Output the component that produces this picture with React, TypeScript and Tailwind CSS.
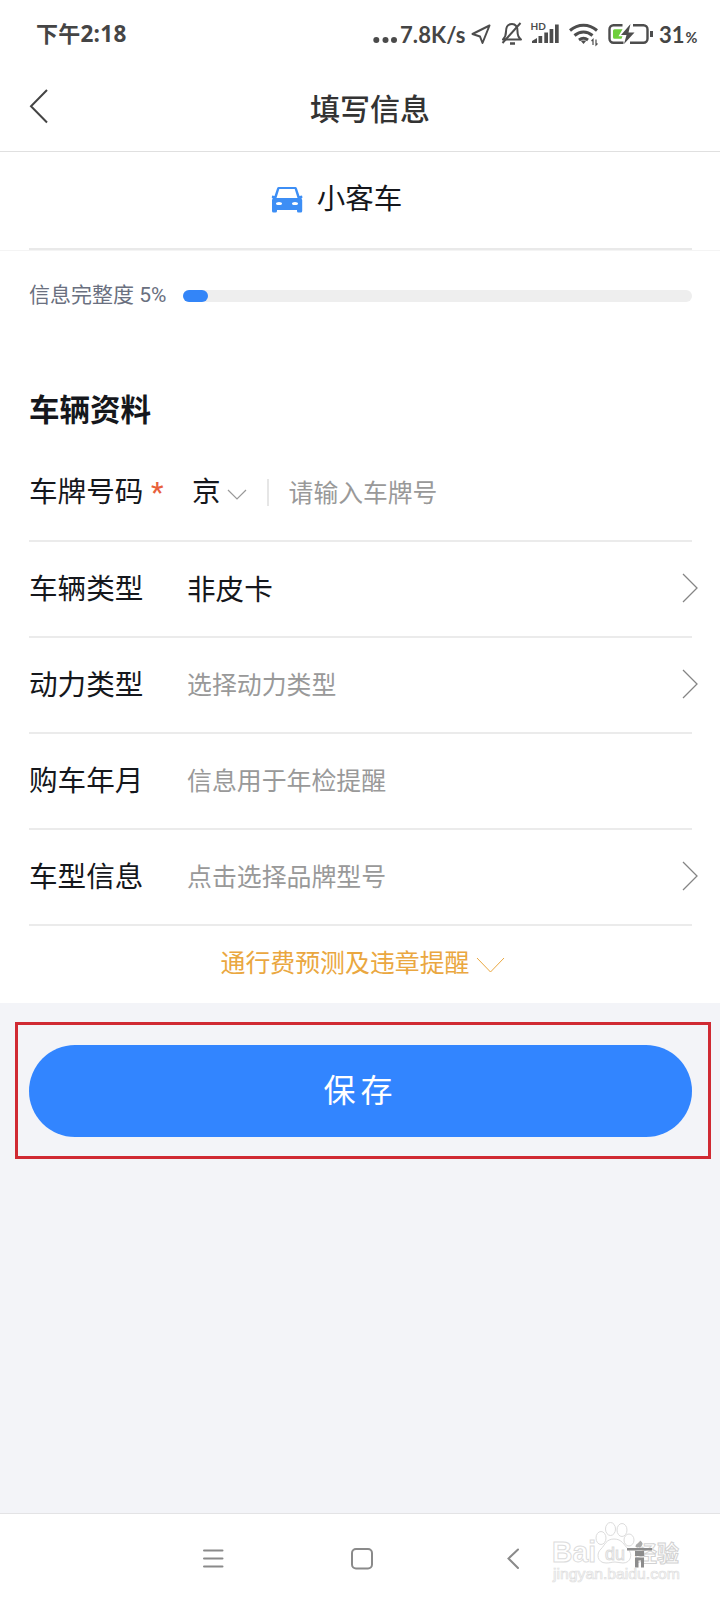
import { clsx } from "clsx";

type Row = {
  label: string;
  value: string;
  filled?: boolean;
  arrow?: boolean;
};

const rows: Row[] = [
  { label: "车辆类型", value: "非皮卡", filled: true, arrow: true },
  { label: "动力类型", value: "选择动力类型", arrow: true },
  { label: "购车年月", value: "信息用于年检提醒" },
  { label: "车型信息", value: "点击选择品牌型号", arrow: true },
];

const StatusBar = () => (
  <div className="flex h-[68px] items-center pl-[36px] font-['Lato','Noto_Sans_CJK_SC',sans-serif] font-bold text-[#454545]">
    <span className="w-[336px] text-[22px] leading-none tracking-[0.2px]">
      下午
      <span className="font-['Open_Sans',sans-serif] text-[22.5px] font-bold tracking-[0.3px]">
        2:18
      </span>
    </span>
    <svg className="h-[50px] w-[28px]" viewBox="372 9 28 50" fill="#4a4a4a">
      <circle cx="376.3" cy="40" r="3" />
      <circle cx="385.5" cy="40" r="3" />
      <circle cx="394" cy="40" r="3" />
    </svg>
    <span className="w-[70px] pt-[1px] text-[22px] leading-none tracking-[0.1px]">
      7.8K/s
    </span>
    {/* Location, muted, signal, wifi and battery */}
    <svg
      className="h-[50px] w-[187px]"
      viewBox="470 9 187 50"
      fill="none"
      stroke="#4d4d4d"
      strokeWidth="2"
    >
      <path d="M489.5 25.5 472.5 34l7.5 2.500 2.500 6.500z" strokeLinejoin="round" />
      <path
        d="M503 39.500h18c-2.500-2-3.500-4-3.500-8 0-5-2-7.500-5.500-7.500s-6 2.500-6 7.500c0 4-1 6-3 8z"
        strokeLinejoin="round"
      />
      <path d="M520.500 23 502.500 43" />
      <path d="M510 43.500h5" strokeWidth="2.500" />
      <g fill="#4d4d4d" stroke="none">
        <path d="M532 43v-2l5-3v5zM538.500 36h3.700v7h-3.700zM544.300 32.500h3.700V43h-3.700zM549.600 29h3.700v14h-3.700zM555 24.500h3.700V43H555z" />
      </g>
      <text
        x="530.500"
        y="30"
        fontSize="10"
        fontWeight="700"
        fill="#4d4d4d"
        stroke="none"
        fontFamily="Lato, sans-serif"
      >
        HD
      </text>
      <g strokeWidth="3">
        <path d="M570 30.500c8-7 19-7 27 0" />
        <path d="M574.500 35.500c5.500-4.700 12.500-4.700 18 0" />
        <path d="M579 40c3-2.300 6-2.300 9 0" />
      </g>
      <path d="M580.500 40.500 583.500 44l3-3.500z" fill="#4d4d4d" stroke="none" />
      <path d="m591.500 41 1.500-1.500V45M597.500 43.500 596 45v-5.500" strokeWidth="1.200" />
      <path
        d="M622.500 25.300h-9a4 4 0 0 0-4 4v9.400a4 4 0 0 0 4 4h10M633 25.300h10.500a4 4 0 0 1 4 4v9.400a4 4 0 0 1-4 4H630"
        strokeWidth="2.400"
      />
      <path d="M651.500 31v6" strokeWidth="3" />
      <path d="M614.500 29.300h8l-4 7h4l-1 2.500h-7a1.500 1.500 0 0 1-1.500-1.500v-6.500a1.500 1.500 0 0 1 1.500-1.500z" fill="#6fcf3c" stroke="none" />
      <path d="M630.500 24 621 35h5.500l-2.500 9 10.500-11.500h-6z" fill="#4d4d4d" stroke="none" />
    </svg>
    <span className="flex items-baseline pt-[1px] pl-[2px] text-[22px] leading-none">
      31<span className="pl-[1px] text-[14.500px]">%</span>
    </span>
  </div>
);

const ArrowRight = () => (
  <svg
    className="mb-[2px] ml-auto h-[30px] w-[16px]"
    viewBox="0 0 16 30"
    fill="none"
    stroke="#858585"
    strokeWidth="1.3"
  >
    <path d="M1 1 15 15 1 29" />
  </svg>
);

const Watermark = () => (
  <svg
    className="absolute top-[6px] left-[545px] h-[80px] w-[160px]"
    viewBox="545 1520 160 80"
    fill="#fff"
    stroke="#dcdcdc"
    strokeWidth="1"
    fontFamily="'Liberation Sans', 'Noto Sans CJK SC', sans-serif"
    fontWeight="700"
  >
    <text x="552" y="1562" fontSize="29" textLength="44" lengthAdjust="spacingAndGlyphs">
      Bai
    </text>
    <ellipse cx="601" cy="1538" rx="5" ry="6.500" />
    <ellipse cx="610.500" cy="1529" rx="5" ry="6.500" />
    <ellipse cx="622" cy="1530" rx="5" ry="6.500" />
    <ellipse cx="629" cy="1540" rx="5" ry="6" />
    <path d="M614 1539c-8 0-9 6-13 10-5 4-4 14 5 14 4 0 6-1 9-1s5 1 8 1c8 0 10-9 5-14-4-4-6-10-14-10z" />
    <text x="605" y="1560" fontSize="18" fontWeight="400" textLength="20" lengthAdjust="spacingAndGlyphs">
      du
    </text>
    <text x="635" y="1560.500" fontSize="22" textLength="44" stroke="#d2d2d2">
      经验
    </text>
    <g fill="#8c8c8c" stroke="none">
      <path d="M627 1548h25v2.500h-25zM635 1551h9v5h-9zM635 1557.500h9v10h-3v-7h-2.500v7H635z" />
      <path
        d="M635.500 1547c0-4 4-3.500 4.500-6.500 3 1.500 3.500 4.500 0 7z"
        fill="#aaa"
      />
    </g>
    <text
      x="553"
      y="1579"
      fontSize="15"
      fontWeight="400"
      strokeWidth="0.700"
      stroke="#dedede"
      textLength="127"
      lengthAdjust="spacingAndGlyphs"
    >
      jingyan.baidu.com
    </text>
  </svg>
);

const App = () => {
  const progress = 5;

  return (
    <div className="flex h-[1600px] w-[720px] flex-col overflow-hidden bg-[#f3f4f8] font-['Roboto','Noto_Sans_CJK_SC',sans-serif] text-[#15171c]">
      <div className="h-[1003px] bg-white">
        <StatusBar />

        {/* Header */}
        <div className="relative flex h-[84px] items-center justify-center border-b border-[#e0e0e0] pl-[20px]">
          <svg
            className="absolute top-[20px] left-[29px] h-[36px] w-[20px]"
            viewBox="0 0 20 36"
            fill="none"
            stroke="#444"
            strokeWidth="2"
          >
            <path d="M18 2 2 18.200 18 34.500" />
          </svg>
          <h1 className="text-[30px] leading-none font-medium text-[#333]">
            填写信息
          </h1>
        </div>

        {/* Vehicle tab */}
        <div className="border-b border-[#f4f4f4]">
          <div className="mr-[28px] ml-[29px] flex h-[98px] items-center justify-center gap-[14px] border-b-2 border-[#e9e9e9] pr-[48px]">
            <svg className="h-[28px] w-[32px]" viewBox="0 0 32 28">
              <path
                fill="#3d8ef5"
                fillRule="evenodd"
                d="M8 1h16a2 2 0 0 1 2 1.400L28.500 10l2.500-.5.5 2-1 1 .7 1.500V25a1.500 1.500 0 0 1-1.500 1.500h-2A1.500 1.500 0 0 1 26 25v-1H6v1a1.500 1.500 0 0 1-1.500 1.500h-2A1.500 1.500 0 0 1 1 25V14l.7-1.500-1-1 .5-2 2.300.5L6 2.400A2 2 0 0 1 8 1zm.3 2L5.500 12h21L23.700 3z"
              />
              <ellipse cx="8" cy="17.500" rx="3" ry="1.600" fill="#fff" />
              <ellipse cx="24" cy="17.500" rx="3" ry="1.600" fill="#fff" />
            </svg>
            <span className="text-[28.500px] leading-none">小客车</span>
          </div>
        </div>

        {/* Progress */}
        <div className="mr-[28px] ml-[29px] flex h-[90px] items-center">
          <span className="w-[154px] pb-[2px] text-[21px] leading-none whitespace-nowrap text-[#6a7080]">
            信息完整度 {progress}%
          </span>
          <div className="h-[12px] flex-1 rounded-full bg-[#eee]">
            <div
              className="h-full rounded-full bg-[#3385f8]"
              style={{ width: `${progress}%` }}
            />
          </div>
        </div>

        <h2 className="mt-[54px] ml-[29px] text-[30.500px] leading-[32px] font-bold">
          车辆资料
        </h2>

        {/* Plate number */}
        <div className="mr-[28px] ml-[29px] flex h-[115px] items-center border-b-2 border-[#ebebeb] pt-[18px]">
          <span className="w-[122px] text-[28.600px] leading-none">车牌号码</span>
          <span className="w-[41px] text-[28px] leading-none font-medium text-[#e8603c]">
            *
          </span>
          <span className="text-[28.600px] leading-none">京</span>
          <svg
            className="mt-[5px] ml-[6px] h-[12px] w-[20px]"
            viewBox="0 0 20 12"
            fill="none"
            stroke="#999"
            strokeWidth="1.200"
          >
            <path d="m1 1 9 9 9-9" />
          </svg>
          <span className="ml-[20px] h-[27px] w-[2px] bg-[#e6e6e6]" />
          <span className="mt-[4px] ml-[20px] text-[24.800px] leading-none text-[#999]">
            请输入车牌号
          </span>
        </div>

        {rows.map((row) => (
          <div
            key={row.label}
            className="mr-[22px] ml-[29px] flex h-[96px] flex-col"
          >
            <div className="flex flex-1 items-center">
              <span className="w-[158px] text-[28.600px] leading-none">
                {row.label}
              </span>
              <span
                className={clsx(
                  "pt-[2px] leading-none",
                  row.filled ? "text-[28.600px]" : "text-[24.900px] text-[#999]"
                )}
              >
                {row.value}
              </span>
              {row.arrow && <ArrowRight />}
            </div>
            <div className="mr-[6px] h-[2px] bg-[#ebebeb]" />
          </div>
        ))}

        <div className="flex h-[77px] items-center justify-center gap-[7px] pl-[6px] text-[#eaa740]">
          <span className="text-[24.900px] leading-none">通行费预测及违章提醒</span>
          <svg
            className="h-[16px] w-[29px]"
            viewBox="0 0 29 16"
            fill="none"
            stroke="currentColor"
            strokeWidth="1"
          >
            <path d="m1 1 13.500 14L28 1" />
          </svg>
        </div>
      </div>

      {/* Save */}
      <div className="mt-[19px] mr-[9px] ml-[15px] h-[137px] border-[3px] border-[#d02a33] px-[11px] pt-[20px] pr-[16px]">
        <button className="h-[92px] w-full rounded-full bg-[#3285ff] text-[32px] leading-none tracking-[5px] text-white">
          保存
        </button>
      </div>

      {/* Navigation bar */}
      <div className="relative mt-auto flex h-[87px] items-center border-t border-[#e3e3e5] bg-white">
        <svg
          className="mt-[2px] ml-[200px] h-[26px] w-[330px]"
          viewBox="200 1545 330 26"
          fill="none"
          stroke="#8a8a8a"
          strokeWidth="2"
          strokeLinecap="round"
        >
          <path d="M204 1550.500h18.500M204 1558.500h18.500M204 1566.500h18.500" />
          <rect x="352" y="1549" width="20" height="19.500" rx="4" />
          <path d="M518 1549.500 508.500 1558.500 518 1568" />
        </svg>
        <Watermark />
      </div>
    </div>
  );
};

export default App;
